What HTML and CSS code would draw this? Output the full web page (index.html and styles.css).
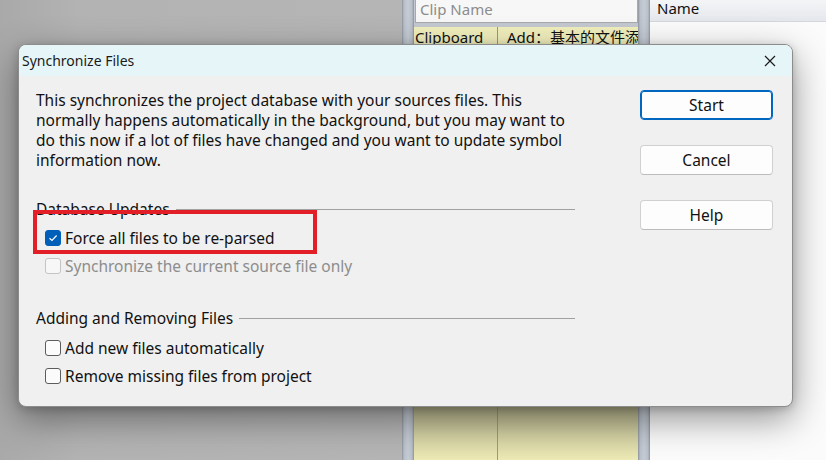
FILE: index.html
```html
<!DOCTYPE html>
<html>
<head>
<meta charset="utf-8">
<link rel="stylesheet" href="styles.css">
</head>
<body>
<div class="desktop">
  <div class="bg-left"></div>
  <div class="splitter"></div>
  <div class="clips">
    <div class="clip-search">Clip Name</div>
    <div class="clip-row">
      <div class="clip-c1">Clipboard</div>
      <div class="clip-c2">Add：基本的文件添加</div>
    </div>
    <div class="clip-fill">
      <div class="clip-c1"></div>
      <div class="clip-c2"></div>
    </div>
  </div>
  <div class="splitter"></div>
  <div class="names">
    <div class="names-head">Name</div>
    <div class="names-body"></div>
  </div>
</div>

<div class="dialog">
  <div class="titlebar">
    <span class="title">Synchronize Files</span>
    <svg class="close" width="12" height="12" viewBox="0 0 12 12"><path d="M1 1L11 11M11 1L1 11" stroke="#1a1a1a" stroke-width="1.2" fill="none"/></svg>
  </div>
  <div class="body">
    <div class="main">
      <p class="intro">This synchronizes the project database with your sources files. This<br>normally happens automatically in the background, but you may want to<br>do this now if a lot of files have changed and you want to update symbol<br>information now.</p>

      <div class="group-head g1"><span>Database Updates</span><i></i></div>
      <label class="row"><span class="cb checked"><svg width="10" height="8" viewBox="0 0 10 8"><path d="M1.5 4.2L4 6.5L8.6 1.5" stroke="#fff" stroke-width="1.2" fill="none"/></svg></span>Force all files to be re-parsed</label>
      <label class="row disabled"><span class="cb"></span>Synchronize the current source file only</label>

      <div class="group-head g2"><span>Adding and Removing Files</span><i></i></div>
      <label class="row"><span class="cb"></span>Add new files automatically</label>
      <label class="row"><span class="cb"></span>Remove missing files from project</label>
    </div>
    <div class="buttons">
      <button class="btn default">Start</button>
      <button class="btn">Cancel</button>
      <button class="btn">Help</button>
    </div>
  </div>
  <div class="highlight"></div>
</div>
</body>
</html>
```
FILE: styles.css
```css
* { box-sizing: border-box; }
html, body { margin: 0; padding: 0; }
body {
  width: 826px;
  height: 460px;
  overflow: hidden;
  position: relative;
  font-family: "Noto Sans", "Noto Sans CJK SC", sans-serif;
  background: #b0b0b0;
}
.desktop {
  display: flex;
  width: 826px;
  height: 460px;
}
.bg-left {
  width: 402px;
  background: linear-gradient(90deg, #a9a9a9 0%, #b3b3b3 20%, #b5b5b5 100%);
}
.splitter {
  width: 12px;
  background: linear-gradient(90deg, #8f949b 0px, #b9c0ca 2px, #c6ccd5 6px, #b9c0ca 10px, #8f949b 12px);
}
.clips {
  width: 224px;
  display: flex;
  flex-direction: column;
  background: #c4c9d1;
}
.clip-search {
  height: 23px;
  margin: 0 0 0 1px;
  background: #f7f7f7;
  border: 1px solid #a9a9a9;
  border-top: none;
  color: #8c8c8c;
  font-size: 15px;
  line-height: 18px;
  padding-left: 4px;
  white-space: nowrap;
}
.clip-row {
  margin-top: 4px;
  height: 20px;
  display: flex;
  background: #f2efbd;
  font-size: 15px;
  line-height: 20px;
  color: #111;
  overflow: hidden;
  white-space: nowrap;
}
.clip-c1 {
  width: 84px;
  border-right: 1px solid #9a9a86;
  padding-left: 1px;
}
.clip-c2 {
  flex: 1;
  padding-left: 9px;
  overflow: hidden;
}
.clip-fill {
  flex: 1;
  display: flex;
  background: linear-gradient(180deg, #f2efbd 0%, #f2efbd 85%, #b6b48d 87%, #edeab6 100%);
}
.names {
  flex: 1;
  display: flex;
  flex-direction: column;
  background: #fbfbfb;
}
.names-head {
  height: 22px;
  background: linear-gradient(180deg, #f4f5f7, #e4e7ec);
  border-bottom: 1px solid #d3d6db;
  font-size: 15px;
  line-height: 16px;
  padding-left: 7px;
  color: #111;
}
.names-body {
  flex: 1;
  background: #fbfbfb;
}

/* dialog */
.dialog {
  position: absolute;
  left: 18px;
  top: 44px;
  width: 775px;
  height: 363px;
  background: #f0f0f0;
  border: 1px solid #8c8c8c;
  border-radius: 8px;
  overflow: hidden;
  box-shadow: 0 12px 36px rgba(0, 0, 0, 0.42), 0 2px 8px rgba(0, 0, 0, 0.18);
}
.titlebar {
  height: 31px;
  background: #e6f6f8;
  display: flex;
  align-items: center;
  justify-content: space-between;
  padding: 0 16px 0 3px;
}
.title {
  font-size: 14px;
  color: #1a1a1a;
}
.close { display: block; }
.body {
  display: flex;
  padding: 14px 0 0 17px;
}
.main {
  width: 539px;
  display: flex;
  flex-direction: column;
  position: relative;
}
.intro {
  margin: 0;
  font-size: 15.5px;
  line-height: 20px;
  color: #111;
  white-space: nowrap;
}
.group-head {
  display: flex;
  align-items: center;
  gap: 6px;
  font-size: 15.5px;
  line-height: 20px;
  color: #111;
}
.group-head i {
  flex: 1;
  height: 1px;
  background: #a0a0a0;
}
.g1 { margin-top: 29px; }
.g2 { margin-top: 28px; }
.row {
  display: flex;
  align-items: center;
  height: 28px;
  padding-left: 9px;
  font-size: 15.5px;
  color: #111;
}
.g1 + .row { margin-top: 5px; }
.g2 + .row { margin-top: 6px; }
.row.disabled { color: #8d8d8d; }
.cb {
  width: 16px;
  height: 16px;
  border: 1px solid #5c5c5c;
  border-radius: 3px;
  background: #fbfbfb;
  margin-right: 4px;
  display: flex;
  align-items: center;
  justify-content: center;
}
.row.disabled .cb {
  border-color: #c4c4c4;
  background: #f7f7f7;
}
.cb.checked {
  background: #005fb8;
  border-color: #005fb8;
}
.buttons {
  margin-left: 65px;
  display: flex;
  flex-direction: column;
  gap: 25px;
}
.btn {
  width: 133px;
  height: 30px;
  border: 1px solid #d0d0d0;
  border-bottom-color: #bcbcbc;
  border-radius: 4px;
  background: #fdfdfd;
  font-family: inherit;
  font-size: 15.5px;
  color: #111;
  padding: 0;
}
.btn.default {
  border: 1px solid #0067c0;
  box-shadow: inset 0 0 0 1px #0067c0;
}
.highlight {
  position: absolute;
  left: 14px;
  top: 165px;
  width: 284px;
  height: 44px;
  border: 4px solid #e21f26;
}
```
